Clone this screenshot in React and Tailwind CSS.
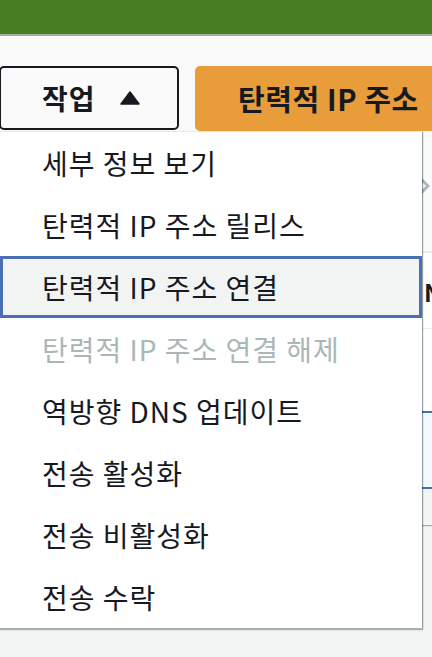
import React from "react";

const items = [
  { label: "세부 정보 보기" },
  { label: "탄력적 IP 주소 릴리스" },
  { label: "탄력적 IP 주소 연결", active: true },
  { label: "탄력적 IP 주소 연결 해제", disabled: true },
  { label: "역방향 DNS 업데이트" },
  { label: "전송 활성화" },
  { label: "전송 비활성화" },
  { label: "전송 수락" },
];

export default function App() {
  return (
    <div
      className="relative w-[432px] h-[657px] overflow-hidden bg-[#f2f3f3] text-[#16191f]"
      style={{ fontFamily: '"Noto Sans CJK KR", "Noto Sans", sans-serif' }}
    >
      <div className="h-[36px] bg-[#487d24] border-b-2 border-[#a3abab]" />
      <div className="bg-[#fafafa] pt-[30px] pb-[1px]">
        <div className="flex items-center h-[64px]">
          <button className="ml-[-1px] w-[180px] h-[64px] border-2 border-[#16191f] rounded-[5px] bg-[#fafafa] flex items-center pl-[41px] gap-[24px]">
            <span className="text-[28px] font-bold leading-none tracking-[1px]">작업</span>
            <svg width="20" height="14" viewBox="0 0 20 14">
              <path d="M10 1 L19 13 L1 13 Z" fill="#16191f" stroke="#16191f" strokeWidth="1.5" strokeLinejoin="round" />
            </svg>
          </button>
          <button className="ml-[16px] flex-1 mr-[-40px] h-[65px] rounded-[5px] bg-[#e89d3a] flex items-center pl-[43px]">
            <span className="text-[29px] font-bold leading-none whitespace-nowrap tracking-[0.6px]">탄력적 IP 주소</span>
          </button>
        </div>
      </div>
      <div className="bg-white shadow-[0_1px_1px_0_rgba(0,28,36,0.35)]">
        <div className="h-[120px] flex justify-end pt-[45px] pr-[2px] bg-[#fafafa]">
          <svg width="12" height="20" viewBox="0 0 12 20">
            <path d="M2 2 L10 10 L2 18" fill="none" stroke="#aab7b8" strokeWidth="3" />
          </svg>
        </div>
        <div className="h-[77px] border-t-2 border-[#eaeded] grid grid-cols-[424px_1fr] items-center overflow-hidden">
          <div />
          <span className="text-[24px] font-bold pt-[2px]">N</span>
        </div>
        <div className="h-[83px] border-t border-[#eaeded]" />
        <div className="h-[78px] border-y-2 border-[#4470b8] bg-[#f1faff]" />
        <div className="h-[36px] bg-[#f4f4f4]" />
      </div>

      <div className="absolute left-0 top-[132px] w-[422px] bg-white shadow-[0_1px_1px_1px_rgba(0,28,36,0.3),1px_0_1px_0_rgba(0,28,36,0.15)]">
        {items.map((it) => (
          <div
            key={it.label}
            className={
              it.active
                ? "h-[62px] flex items-center pl-[39px] border-[3px] border-[#4a6fb3] bg-[#f2f3f3] text-[28px] tracking-[1px] whitespace-nowrap"
                : it.disabled
                ? "h-[62px] flex items-center pl-[42px] text-[28px] tracking-[1px] text-[#aab7b8] whitespace-nowrap"
                : "h-[62px] flex items-center pl-[42px] text-[28px] tracking-[1px] whitespace-nowrap"
            }
          >
            {it.label}
          </div>
        ))}
      </div>
    </div>
  );
}
